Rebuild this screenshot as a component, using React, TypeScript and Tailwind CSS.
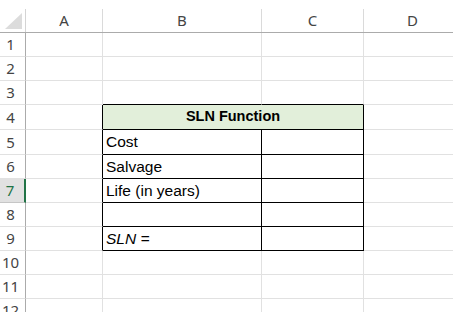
import React from 'react';

const COLS = [
  { key: 'A', w: 77 },
  { key: 'B', w: 159 },
  { key: 'C', w: 102 },
  { key: 'D', w: 98 },
];

// row heights include the 1px bottom grid line
const ROW_H = [24, 24, 24, 25, 25, 24, 24, 24, 24, 24, 24, 24];

const inTable = (r: number) => r >= 4 && r <= 9;

const cellText: Record<string, { text: string; italic?: boolean }> = {
  'B5': { text: 'Cost' },
  'B6': { text: 'Salvage' },
  'B7': { text: 'Life (in years)' },
  'B9': { text: 'SLN =', italic: true },
};

function Cell({ row, col, w }: { row: number; col: string; w: number }) {
  // right border: black for table edges (A right edge, B/C inside table)
  const blackRight =
    inTable(row) && (col === 'A' || col === 'C' || (col === 'B' && row !== 4));
  const blackBottom = (row === 3 || inTable(row)) && (col === 'B' || col === 'C');
  const t = cellText[col + row];

  return (
    <div
      className={`shrink-0 h-full flex items-center border-r border-b ${
        blackRight ? 'border-r-black' : 'border-r-[#e1e1e1]'
      } ${blackBottom ? 'border-b-black' : 'border-b-[#e1e1e1]'}`}
      style={{ width: w }}
    >
      {t && (
        <span className={`pl-[3px] text-[15.5px] text-black ${t.italic ? 'italic' : ''}`}>
          {t.text}
        </span>
      )}
    </div>
  );
}

export default function App() {
  return (
    <div
      className="w-[453px] h-[312px] overflow-hidden bg-white"
      style={{ fontFamily: '"Liberation Sans", Arial, sans-serif' }}
    >
      {/* column headers */}
      <div className="flex h-[33px] border-b border-b-[#ababab]">
        <div className="w-[26px] shrink-0 relative border-r border-r-[#d4d4d4] mt-[9px]">
          <svg width="17" height="16" viewBox="0 0 17 16" className="absolute left-[5px] top-[4px]">
            <polygon points="17,0 17,16 0,16" fill="#dcdcdc" />
          </svg>
        </div>
        {COLS.map(c => (
          <div
            key={c.key}
            className="shrink-0 mt-[9px] border-r border-r-[#dadada] flex items-center justify-center text-[15px] text-[#444]"
            style={{ width: c.w, fontFamily: '"Noto Sans", "Open Sans", sans-serif' }}
          >
            {c.key}
          </div>
        ))}
      </div>

      {ROW_H.map((h, i) => {
        const row = i + 1;
        const selected = row === 7;
        return (
          <div key={row} className="flex" style={{ height: h }}>
            <div
              className={`w-[26px] shrink-0 h-full flex items-center justify-center pr-[4px] text-[15px] border-b ${
                selected
                  ? 'bg-[#e1e1e1] text-[#217346] border-r-2 border-r-[#217346] border-b-[#c6c6c6]'
                  : 'text-[#444] border-r border-r-[#ababab] border-b-[#e1e1e1]'
              }`}
              style={{ fontFamily: '"Noto Sans", "Open Sans", sans-serif' }}
            >
              {row}
            </div>
            {row === 4 ? (
              <>
                <Cell row={row} col="A" w={77} />
                <div className="w-[261px] shrink-0 h-full flex items-center justify-center bg-[#e2efda] border-r border-b border-black">
                  <span className="text-[14.5px] font-bold text-black">SLN Function</span>
                </div>
                <Cell row={row} col="D" w={98} />
              </>
            ) : (
              COLS.map(c => <Cell key={c.key} row={row} col={c.key} w={c.w} />)
            )}
          </div>
        );
      })}
    </div>
  );
}
